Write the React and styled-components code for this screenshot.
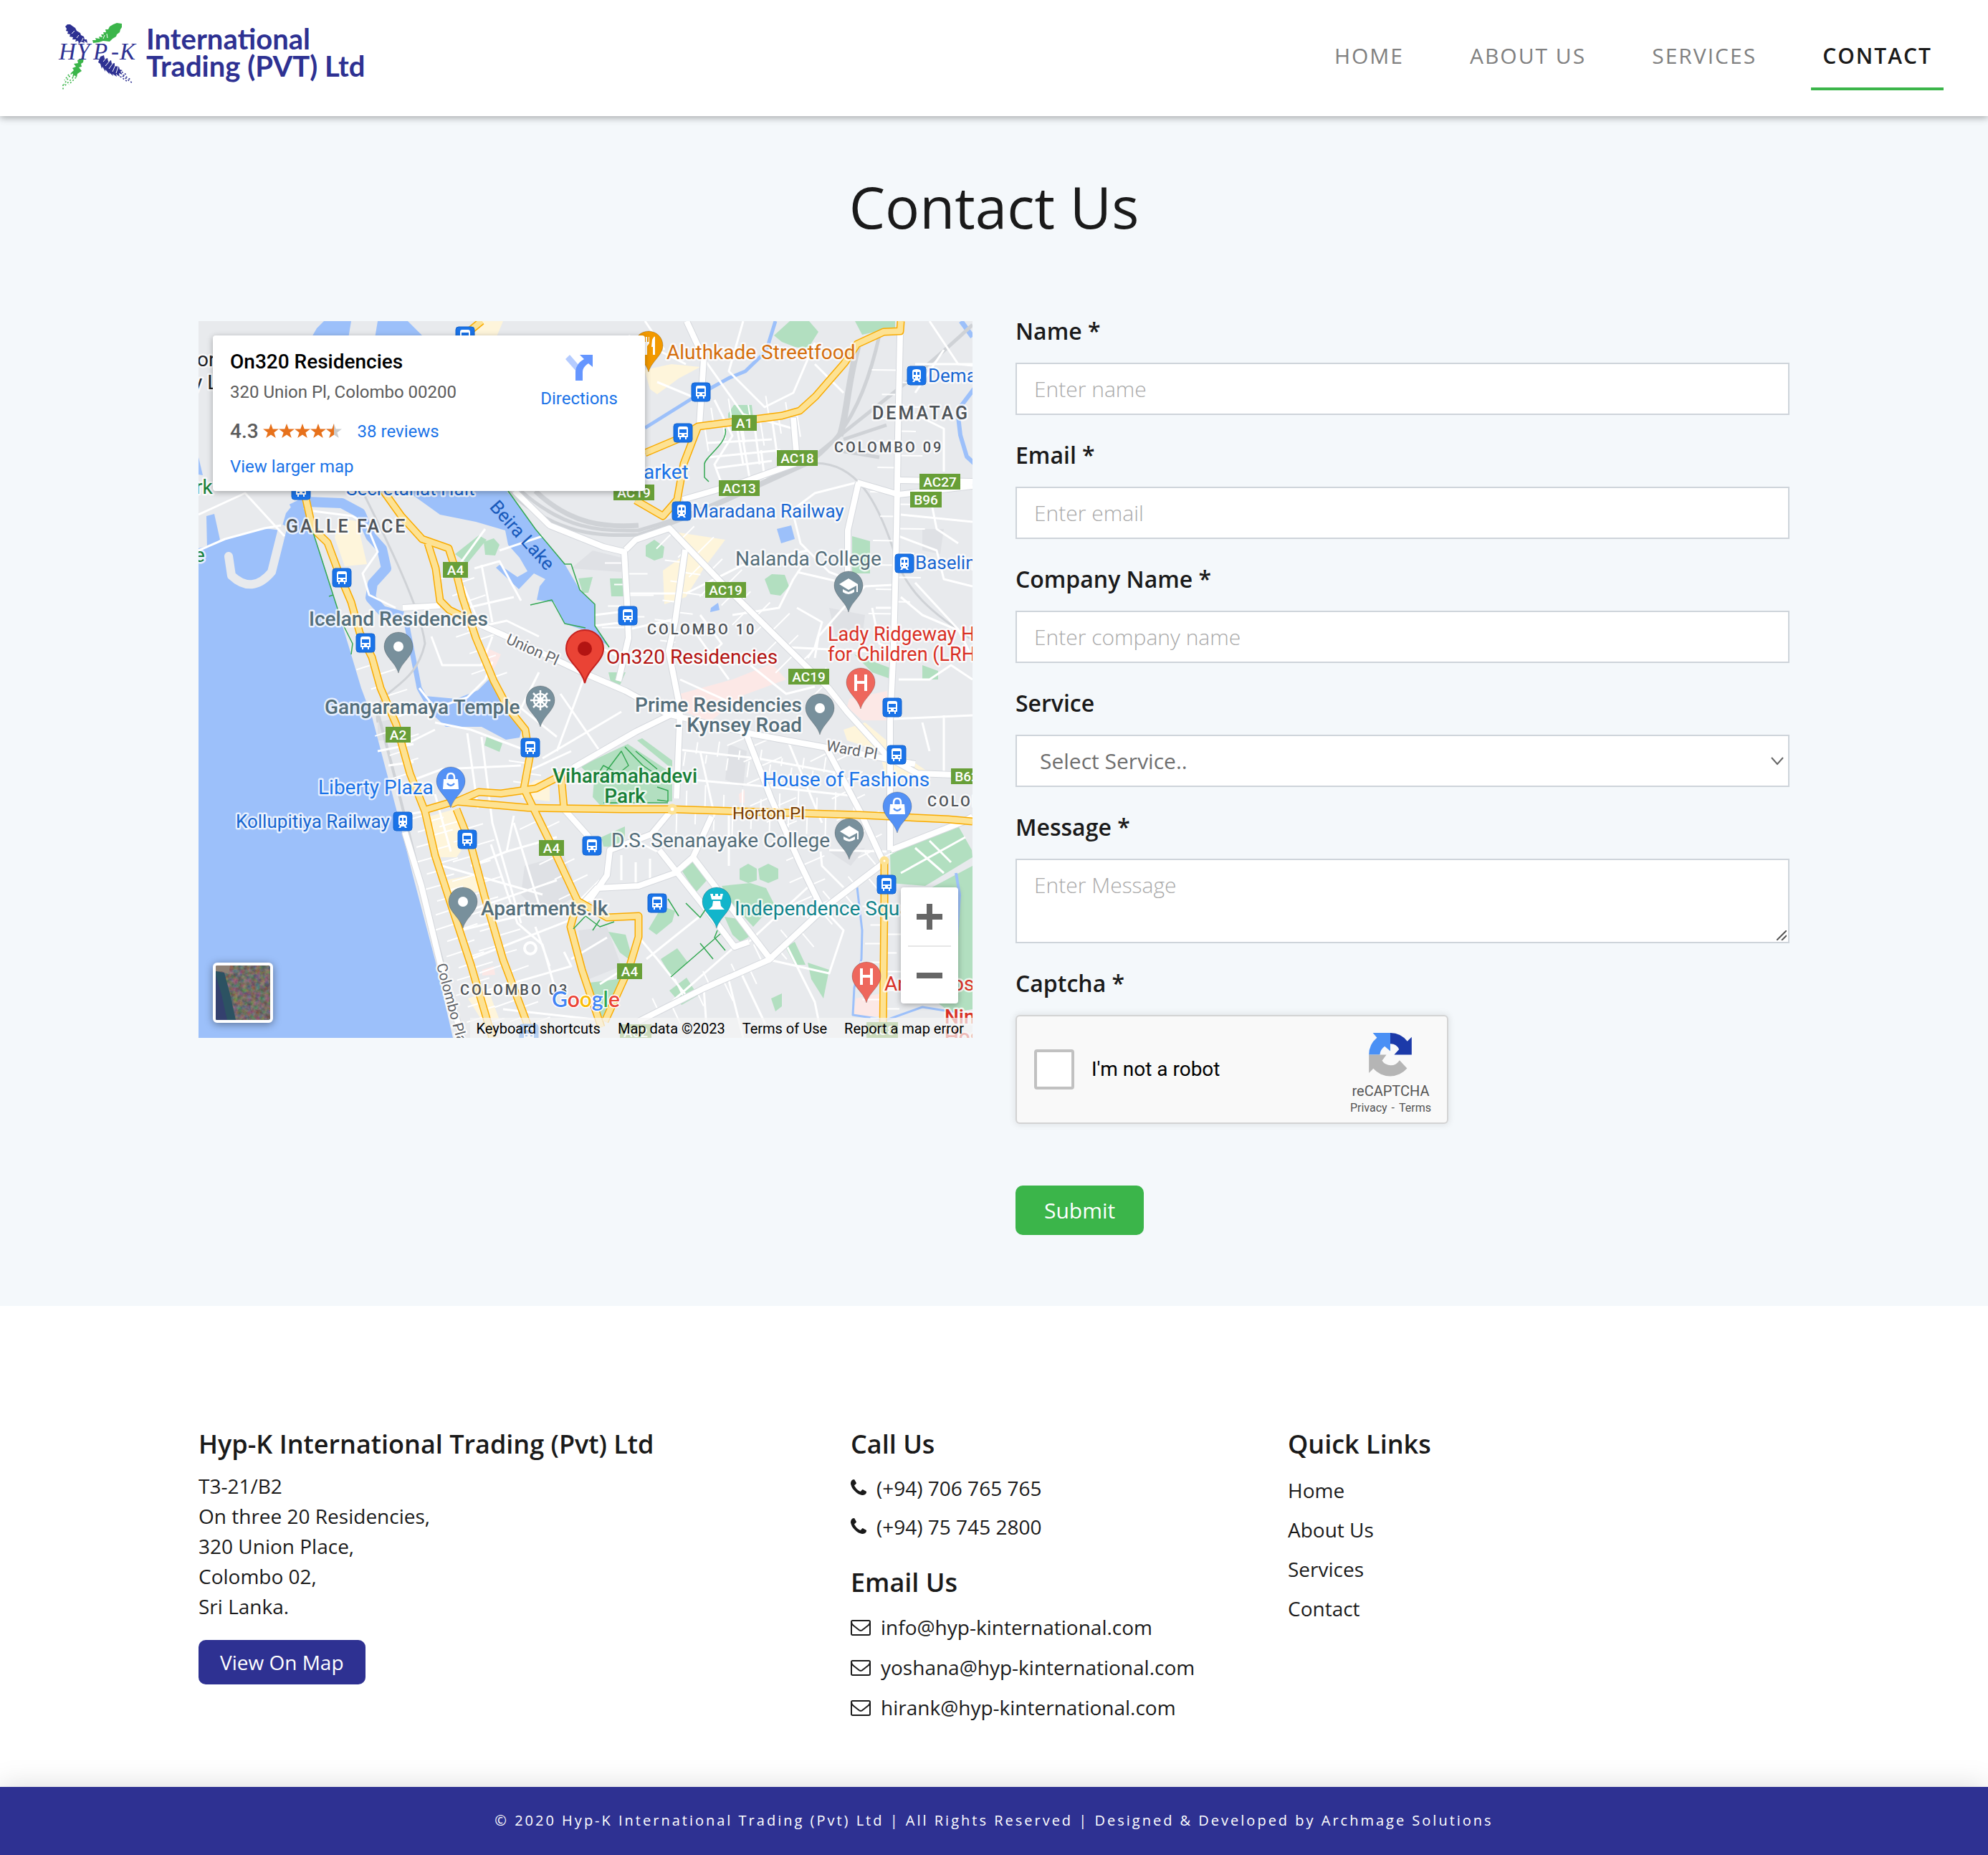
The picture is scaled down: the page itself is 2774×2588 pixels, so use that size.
import React from "react";
import styled, { createGlobalStyle } from "styled-components";

const GREEN = "#3bb54a";
const BLUE = "#2e3192";
const INK = "#1a1a1a";
const LINK = "#1a73e8";

const GlobalStyle = createGlobalStyle`
  *, *::before, *::after { box-sizing: border-box; }
  body {
    margin: 0;
    background: #fff;
    color: ${INK};
    font-family: "Open Sans", "Noto Sans", sans-serif;
    font-size: 28px;
  }
  a { color: inherit; text-decoration: none; }
  h1, h2, p, ul { margin: 0; padding: 0; }
  ul { list-style: none; }
  button, input, select, textarea { font: inherit; }
`;

/* ---------- header ---------- */

const Header = styled.header`
  position: relative;
  z-index: 1;
  display: flex;
  align-items: center;
  justify-content: space-between;
  height: 162px;
  padding: 0 32px 0 80px;
  background: #fff;
  box-shadow: 0 2px 10px rgba(0, 0, 0, 0.35);
`;

const Brand = styled.a`
  display: flex;
  align-items: center;
  gap: 8px;
  margin-bottom: 16px;
  color: ${BLUE};
  font: 700 40px/38px Lato, sans-serif;

  svg { margin-top: 10px; }
`;

const Nav = styled.nav`
  display: flex;
`;

const NavLink = styled.a`
  margin: 0 30px;
  padding: 18px 16px 20px;
  border-bottom: 4px solid ${(p) => (p.$active ? GREEN : "transparent")};
  color: ${(p) => (p.$active ? INK : "#808080")};
  font-weight: ${(p) => (p.$active ? 600 : 400)};
  font-size: 30px;
  line-height: 48px;
  letter-spacing: 2px;
`;

/* ---------- page ---------- */

const Section = styled.main`
  padding: 78px 40px 99px;
  background: #f4f8fb;
`;

const Title = styled.h1`
  margin-bottom: 104px;
  text-align: center;
  font-weight: 400;
  font-size: 80px;
  line-height: 96px;
`;

const Container = styled.div`
  display: grid;
  grid-template-columns: ${(p) => p.$columns};
  column-gap: ${(p) => p.$gap || "0"};
  align-items: start;
  max-width: 2220px;
  margin: 0 auto;
`;

/* ---------- map ---------- */

const MapFrame = styled.section`
  position: relative;
  height: 1000px;
  margin-top: 8px;
  overflow: hidden;
  background: #e8eaed;
  color: #000;
  font-family: Roboto, sans-serif;
`;

const MapCanvas = styled.svg`
  display: block;
  width: 100%;
  height: 100%;
  font-family: Roboto, sans-serif;
`;

const PlaceCard = styled.div`
  position: absolute;
  top: 20px;
  left: 20px;
  display: flex;
  justify-content: space-between;
  width: 603px;
  height: 217px;
  padding: 19px 38px 0 24px;
  border-radius: 4px;
  background: #fff;
  box-shadow: 0 2px 8px rgba(0, 0, 0, 0.3);
  font-size: 24px;
  line-height: 32px;

  a { color: ${LINK}; }
`;

const PlaceName = styled.h2`
  font-weight: 500;
  font-size: 28px;
  line-height: 36px;
`;

const PlaceAddress = styled.p`
  margin-top: 8px;
  color: #5b5b5b;
`;

const Rating = styled.div`
  display: flex;
  align-items: center;
  margin: 23px 0 17px;
  color: #5b5b5b;
  font-size: 28px;
  font-weight: 500;

  svg { margin: 0 22px 0 6px; }
  a { font-size: 24px; font-weight: 400; }
`;

const Directions = styled.a`
  display: flex;
  flex-direction: column;
  align-items: center;
  gap: 9px;
  padding-top: 8px;
`;

const ZoomControl = styled.div`
  position: absolute;
  right: 20px;
  bottom: 48px;
  width: 80px;
  border-radius: 4px;
  background: #fff;
  box-shadow: 0 2px 8px rgba(0, 0, 0, 0.3);
`;

const ZoomButton = styled.button`
  display: grid;
  place-items: center;
  width: 60px;
  height: 81px;
  margin: 0 10px;
  padding: 0;
  border: 0;
  background: none;

  & + & { border-top: 2px solid #e6e6e6; }
`;

const SatelliteButton = styled.button`
  position: absolute;
  left: 20px;
  bottom: 21px;
  width: 84px;
  height: 84px;
  padding: 0;
  overflow: hidden;
  border: 4px solid #fff;
  border-radius: 6px;
  box-shadow: 0 2px 12px rgba(0, 0, 0, 0.4);

  svg { display: block; }
`;

const Attribution = styled.div`
  position: absolute;
  right: 0;
  bottom: 0;
  display: flex;
  gap: 24px;
  padding: 2px 12px 0 8px;
  background: rgba(245, 245, 245, 0.7);
  font-size: 20px;
  line-height: 26px;

  button { padding: 0; border: 0; background: none; color: #000; }
`;

/* ---------- form ---------- */

const Form = styled.form`
  display: flex;
  flex-direction: column;
  align-items: flex-start;
`;

const Field = styled.div`
  width: 100%;
  margin-bottom: ${(p) => (p.$last ? "86px" : "34px")};
`;

const Label = styled.label`
  display: block;
  margin-bottom: 22px;
  font-weight: 600;
  font-size: 32px;
  line-height: 44px;
`;

const Input = styled.input`
  display: block;
  width: 100%;
  height: ${(p) => (p.$tall ? "118px" : "73px")};
  padding: ${(p) => (p.$tall ? "12px 24px" : "0 24px")};
  border: 2px solid #ced4da;
  border-radius: 0;
  background: #fff;
  color: #555;
  font-weight: 300;
  font-size: 30px;
  line-height: 45px;

  &::placeholder { color: #a9a9a9; opacity: 1; }
  &::-webkit-resizer { display: none; }
`;

const Select = styled(Input)`
  appearance: none;
  padding-left: 32px;
  color: #6f6f6f;
  font-weight: 400;
`;

const ControlWrap = styled.div`
  position: relative;

  svg { position: absolute; pointer-events: none; }
`;

const Chevron = styled.svg`
  top: 31px;
  right: 8px;
`;

const Grip = styled.svg`
  right: 4px;
  bottom: 4px;
`;

const Captcha = styled.div`
  display: flex;
  align-items: center;
  width: 604px;
  height: 152px;
  padding: 0 22px 0 24px;
  border: 2px solid #d3d3d3;
  border-radius: 6px;
  background: #f9f9f9;
  box-shadow: 0 0 8px 2px rgba(0, 0, 0, 0.08);
  color: #000;
  font: 28px/34px Roboto, sans-serif;

  input {
    appearance: none;
    width: 56px;
    height: 56px;
    margin: 0 24px 0 0;
    border: 4px solid #c1c1c1;
    border-radius: 4px;
    background: #fff;
  }
`;

const CaptchaBrand = styled.div`
  display: flex;
  flex-direction: column;
  align-items: center;
  margin-left: auto;
  padding-top: 14px;
  color: #555;
  font-size: 20px;
  line-height: 24px;

  svg { margin-bottom: 8px; }
  small { display: flex; gap: 6px; font-size: 16px; }
`;

const Button = styled.button`
  display: inline-flex;
  align-items: center;
  height: ${(p) => (p.$small ? "62px" : "69px")};
  padding: ${(p) => (p.$small ? "0 30px" : "0 40px")};
  border: 0;
  border-radius: 10px;
  background: ${(p) => (p.$small ? BLUE : GREEN)};
  color: #fff;
  font-size: ${(p) => (p.$small ? "28px" : "30px")};
`;

/* ---------- footer ---------- */

const Footer = styled.footer`
  padding: 171px 40px 83px;
`;

const FooterTitle = styled.h2`
  font-weight: 600;
  font-size: 36px;
  line-height: 44px;

  ul + & { margin-top: 29px; }
`;

const Address = styled.address`
  margin: 15px 0 26px;
  font-style: normal;
  line-height: 42px;
`;

const LinkList = styled.ul`
  margin-top: ${(p) => (p.$row === 55 ? 15 : 12)}px;

  li { line-height: ${(p) => p.$row}px; }
  a { display: flex; align-items: center; gap: 14px; }
`;

const BottomBar = styled.div`
  padding: 32px 20px 33px;
  background: ${BLUE};
  box-shadow: 0 0 40px rgba(0, 0, 0, 0.15);
  color: #fff;
  text-align: center;
  font-size: 20px;
  line-height: 30px;
  letter-spacing: 3px;
`;

/* ---------- icons ---------- */

const Logo = () => (
  <svg width="116" height="104" viewBox="0 0 116 104" aria-hidden="true">
    <path fill={BLUE} d="M11 11 14 8 18 8 22 11 25 13 27 17 32 20 33 23 37 25 38 29 41 29 42 34 37 31 38 34 33 32 30 35 29 31 25 32 26 29 21 29 22 26 17 25 18 22 14 21 15 18 12 17 13 14Z" />
    <path fill={GREEN} d="M90 7 90 12 88 15 87 19 83 22 82 25 77 28 73 32 64 31 58 33 50 34 49 30 54 30 53 27 59 28 58 25 63 26 61 22 65 22 64 19 68 19 67 15 71 15 73 11 78 8 83 6Z" />
    <path fill={BLUE} d="M60 53 65 51 66 56 70 55 71 60 75 58 76 63 80 62 80 66 86 67 87 71 91 72 88 74 91 78 86 76 87 81 82 77 83 81 77 77 78 80 72 75 73 78 67 71 67 74 63 67 62 70 60 63 57 61Z" />
    <g stroke="#fff" strokeWidth="1">
      <path d="M64 60l5-6M67 66l6-7M72 70l5-7M77 74l4-9M82 76l3-9M24 17l-4 4M30 23l-3 4M36 27l-2 4M64 28l2-5M70 27l-1-6" />
    </g>
    <path fill="none" stroke={BLUE} strokeWidth="1.6" strokeDasharray="2 2.6" d="M84 78l14 10M88 76l14 9M91 80l14 10M86 72l10 6" />
    <path fill={GREEN} d="M37 54 36 61 33 63 34 67 30 68 34 73 28 77 27 82 24 79 21 83 22 77 19 76 23 72 21 69 26 67 23 63 29 62 28 58Z" />
    <path fill="none" stroke={GREEN} strokeWidth="1.6" strokeDasharray="2 2.6" d="M20 76L9 92M22 82L10 94M26 82L16 92M16 78l-6 8M8 92v8" />
    <text y="57" x="2 27 50 75 87" fill={BLUE} fontFamily="Liberation Serif, serif" fontStyle="italic" fontWeight="400" fontSize="33">HYP-K</text>
  </svg>
);

const Phone = () => (
  <svg width="22" height="28" viewBox="192 0 1408 1792" fill="currentColor" aria-hidden="true">
    <path d="M1600 1240q0 27-10 70.500t-21 68.500q-21 50-122 106-94 51-186 51-27 0-53-3.500t-57.500-12.500-47-14.500-55.500-20.500-49-18q-98-35-175-83-127-79-264-216t-216-264q-48-77-83-175-3-9-18-49t-20.500-55.500-14.500-47-12.500-57.500-3.500-53q0-92 51-186 56-101 106-122 25-11 68.500-21t70.500-10q14 0 21 3 18 6 53 76 11 19 30 54t35 63.500 31 53.500q3 4 17.500 25t21.500 35.500 7 28.500q0 20-28.500 50t-62 55-62 53-28.500 46q0 9 5 22.500t8.500 20.500 14 24 11.500 19q76 137 174 235t235 174q2 1 19 11.500t24 14 20.500 8.500 22.500 5q18 0 46-28.500t53-62 55-62 50-28.500q14 0 28.500 7t35.500 21.500 25 17.500q25 15 53.500 31t63.500 35 54 30q70 35 76 53 3 7 3 21z" />
  </svg>
);

const Envelope = () => (
  <svg width="28" height="28" viewBox="0 0 1792 1792" fill="currentColor" aria-hidden="true">
    <path d="M1664 1504v-768q-32 36-69 66-268 206-426 338-51 43-83 67t-86.500 48.500-102.500 24.500h-2q-48 0-102.500-24.500t-86.500-48.500-83-67q-158-132-426-338-37-30-69-66v768q0 13 9.500 22.500t22.500 9.500h1472q13 0 22.500-9.500t9.500-22.500zm0-1051v-24.500l-.5-13-3-12.500-5.500-9-9-7.500-14-2.500h-1472q-13 0-22.500 9.500t-9.500 22.500q0 168 147 284 193 152 401 317 6 5 35 29.500t46 37.500 44.500 31.500 50.500 27.500 43 9h2q20 0 43-9t50.500-27.500 44.500-31.500 46-37.500 35-29.500q208-165 401-317 54-43 100.500-115.500t46.500-131.500zm128-37v1088q0 66-47 113t-113 47h-1472q-66 0-113-47t-47-113v-1088q0-66 47-113t113-47h1472q66 0 113 47t47 113z" />
  </svg>
);

const RecaptchaLogo = () => (
  <svg width="60" height="61" viewBox="0 0 176 180" aria-hidden="true">
    <path fill="#1c3aa9" d="M88 0A88 88 0 0 1 158 35L176 17V90H104L124 68A38 38 0 0 0 88 45Z" />
    <path fill="#4a90f5" d="M88 0H16L33 20A90 90 0 0 0 0 90H45A46 46 0 0 1 65 55L88 75Z" />
    <path fill="#b5b5b5" d="M0 90H72L54 114A42 42 0 0 0 126 113L157 146A92 92 0 0 1 18 147L0 165Z" />
  </svg>
);

const STAR = "M11 0 13.700 7.600H22L15.400 12.400 17.800 20 11 15.400 4.200 20 6.600 12.400 0 7.600H8.300Z";

const Stars = () => (
  <svg width="110" height="22" viewBox="0 0 110 22" aria-hidden="true">
    {[0, 22, 44, 66].map((x) => (
      <path key={x} transform={`translate(${x} 0)`} d={STAR} fill="#e7711b" />
    ))}
    <g transform="translate(88 0)">
      <path d={STAR} fill="#ccc" />
      <path d="M11 0V15.400L4.200 20 6.600 12.400 0 7.600H8.300Z" fill="#e7711b" />
    </g>
  </svg>
);

/* ---------- map drawing ---------- */

const WATER = [
  "M0 317 8 315 37 304 92 289 115 292 122 268 135 252 150 265 159 292 172 330 188 382 213 465 227 512 242 552 276 681 299 773 330 891 355 1000H0Z",
  "M291 237H432L470 290 511 339 532 375 553 395V425L573 454 540 432 511 422 496 392 472 389 476 370 484 360 468 352 447 374 415 344 420 340 445 357 459 349 448 330 432 312 428 292 387 280 337 270Z",
  "M316 523 360 527 390 515 410 495 414 516 433 548 452 566 448 581 429 584 395 566 345 566 330 552 322 541Z",
  "M175 0H213L209 24H157L165 10Z",
  "M250 0H292L300 8 316 24H246Z",
  "M807 290 827 285 832 304 813 310Z",
  "M715 400 725 393 727 403 714 406Z",
  "M11 272 22 269 30 305 12 318Z",
  "M0 190 6 215 0 214Z",
];

const CANALS = [
  ["M130 262 150 252 200 254 226 268 240 300 256 318 262 345 243 366 240 386 256 404 285 412", 14],
  ["M289 415 308 512 318 530", 7],
  ["M805 0 792 42 763 70 741 79 687 109 623 149", 5],
  ["M1064 0 1080 22", 7],
  ["M1084 92 1059 125 1063 159 1072 189 1084 200", 6],
  ["M919 790 926 850 925 890 915 930 913 968 960 975 1010 957 1080 968", 3],
  ["M1057 770 1062 800 1058 860", 4],
];

const PARKS = [
  "M825 0H852L865 15 850 39 832 36 814 29 803 20Z",
  "M916 0H972V9L926 19Z",
  "M747 117H772L774 135H739V129Z",
  "M624 313 636 305 650 315 648 330 636 334 624 328Z",
  "M912 300 937 307V352H912Z",
  "M790 360 800 353 818 354 824 370 812 383 798 381Z",
  "M574 359H594V384H576Z",
  "M530 359 550 357 544 379H536Z",
  "M358 325 391 299 402 305 375 338Z",
  "M398 308 412 303 420 312 414 327 400 326Z",
  "M533 621 599 590 661 631V670L560 675 550 664 552 640Z",
  "M619 582 661 613V625L612 585Z",
  "M674 766 690 750 712 777 694 797Z",
  "M755 764 767 757 779 764V780L767 784 755 779Z",
  "M781 764 795 757 809 764V778L795 784 783 779Z",
  "M730 788 770 784 792 791 803 813 774 845 741 809Z",
  "M734 831 752 834 768 859 756 866 745 856Z",
  "M628 848 647 816 665 823 661 838 639 856Z",
  "M645 890 668 875 683 895 659 913Z",
  "M657 934 681 916 697 941 674 954Z",
  "M572 852 596 856 607 895 588 881Z",
  "M545 923 570 920 599 916 567 973 556 965Z",
  "M799 945 814 938V956L805 963Z",
  "M819 873 832 866 847 898 832 898Z",
  "M850 895 880 905 872 945 855 918Z",
  "M965 741 1061 706 1079 738 1080 748 1014 788 966 784Z",
  "M1080 760 1014 795 1030 950 1050 965 1080 960Z",
  "M915 465 968 485V500L940 490Z",
  "M1010 480 1032 488V500H1010Z",
  "M402 580 424 589 420 601 399 592Z",
  "M572 490 596 490 588 508 575 503Z",
  "M562 720 595 705 595 735 565 733Z",
];

const PINK = [
  "M672 520 745 500 800 478 820 500 760 522 712 560 679 545Z",
  "M908 527 961 516V557H926L905 538Z",
  "M917 945 952 938V970H914Z",
  "M400 455 422 465 415 480 405 495Z",
  "M396 905 412 900 414 912 396 913Z",
  "M754 660 762 654V672H755Z",
];

const SHOPS = [
  "M196 275 221 279 235 339 204 342 190 302Z",
  "M322 691 357 681 372 731 360 748 334 748Z",
  "M622 68 660 60 700 64 670 80 640 102 630 95Z",
  "M648 348 680 325 735 305 705 345 680 385 650 395Z",
  "M670 295 735 305 690 335Z",
  "M392 0H425L415 24H380Z",
  "M900 570 930 560 990 610 1020 630 960 640 950 600 905 585Z",
  "M345 780 395 770 400 795 350 800Z",
  "M470 640 490 640 490 670 450 665 450 655Z",
  "M376 945 405 935 420 975 395 975Z",
];

const BLOCKS = [
  "M455 760 510 745 530 800 480 830 450 800Z",
  "M530 850 570 845 590 900 540 920Z",
  "M550 320 590 330 590 350 520 345Z",
  "M880 740 930 735 910 760Z",
  "M880 400 930 410 925 450 890 445Z",
  "M250 560 270 555 265 585 250 585Z",
  "M1010 290 1040 290 1035 325 1010 320Z",
  "M740 590 765 600 760 650 735 640Z",
];

const RAILS = [
  ["M432 237C500 300 560 300 614 298 680 278 760 240 850 199 900 165 930 110 950 20", 5],
  ["M450 237C510 290 560 294 614 292 700 268 780 230 860 188 930 130 1000 80 1080 5", 5],
  ["M470 237C520 285 570 288 614 285", 7],
  ["M895 160C905 130 905 90 920 35", 9],
  ["M900 165 960 145M890 180 950 190", 5],
  ["M850 199C920 190 950 260 970 320 985 380 1030 410 1080 445", 3],
  ["M230 240C260 300 310 400 316 450 300 520 240 510 250 560", 3],
  ["M250 545 275 640 300 740 350 930", 4],
];

const MAJOR = [
  "M148 240 159 289 180 309 196 352 213 392 225 435 242 469 254 512 276 563 295 631 316 684 330 745 353 816 380 898 410 1000",
  "M258 237 283 272 312 304 349 317 358 345 368 385 387 442 412 502 432 540 456 570 462 609 454 652 468 681 494 734 529 809 570 832 614 830 614 859 601 902 567 977",
  "M529 809 519 845 535 905 562 985",
  "M320 310 331 345 337 390 350 403 385 420",
  "M316 682 357 670 460 679 593 681 661 681 923 689 1046 695 1080 698",
  "M352 674 391 657 422 659 471 652 506 634 510 680",
  "M360 681 380 731 399 802 425 891 466 1000",
  "M980 0 979 14 956 15 919 32 901 59 861 105 839 125 814 132 697 147 668 165 623 184",
  "M697 147 677 199 668 249 648 272 610 250",
  "M395 0 378 14",
  "M957 752V809L955 1000",
];

const STREETS = [
  "M979 19 976 159 974 292 970 452 965 559V738",
  "M681 0 705 52 699 145",
  "M441 237 490 285 565 315 594 322 598 392 600 442 586 502",
  "M596 319 610 305 657 289 727 362 821 455 879 512 905 545 963 609 1003 631 1080 634",
  "M679 319 672 369 665 419 656 460 672 541 667 666",
  "M676 249 759 225 832 199 834 182 830 135",
  "M919 225 977 242 1080 230M921 225 906 292V352M977 222 1080 224",
  "M385 420 441 445 540 492 596 516 654 548 777 577 876 595 1000 618",
  "M523 623 610 573 661 548",
  "M763 573 799 666 839 756 868 816",
  "M876 595 923 684 956 756",
  "M956 756 872 820 796 891 705 931 614 977",
  "M643 738 705 816 748 873 768 866M690 748 800 893",
  "M716 691 690 748 665 770 614 788 556 791 523 827",
  "M661 681 632 716 574 738 570 773 545 809",
  "M285 400 337 397",
  "M288 713 311 788 337 895 368 1000",
  "M966 738 1068 698 1080 691",
  "M510 681 545 720",
];

const LANES = [
  "M160 265 215 272 235 285 250 322 229 352 238 382 275 400",
  "M0 320 37 304 92 289 115 285M0 270 65 240 120 300",
  "M600 20 680 60M623 0 650 40M705 52 760 130 830 150M760 0 740 70 790 120 830 100 860 30",
  "M860 60 900 100M640 85 700 110M720 110 745 160 720 200 735 240M757 150 770 225M785 180 790 220",
  "M710 170 800 165M712 190 812 180M722 205 800 195M750 140 760 200M775 140 783 200M800 135 808 190",
  "M594 380 668 380M600 430 668 415M680 380 760 340 850 320M830 270 840 310 880 350 906 360",
  "M820 270 860 240 919 225M745 410 810 400 830 360 850 330M835 400 870 420 860 455 850 470",
  "M821 455 880 458 960 462M860 470 865 440 900 400 930 370 970 368M835 350 900 365",
  "M700 480 730 450 700 410M672 500 760 540M770 480 820 520 860 510M690 430 740 500",
  "M672 598 780 610 890 630M690 640 800 650 910 662M820 580 870 700M700 600 720 690",
  "M977 300 1030 320 1040 360 1080 370M1020 240 1030 290 1060 310M1000 365 1060 430 1080 470",
  "M945 400 970 400M940 400 950 450 1000 470M980 385 1010 410 1080 440M1000 60 1080 60M1000 130 1040 150V210",
  "M977 500 1020 500 1050 480 1080 500M970 555 1080 550M1010 560 1020 600M1040 550 1040 630M980 270 1080 280",
  "M308 512 330 540 375 525 400 500 410 475M330 560 380 570 460 600M375 575 390 680M395 580 410 700 450 840",
  "M300 640 340 625 450 620M290 590 330 570M410 440 395 480 340 480 325 440M375 430 430 418 475 440",
  "M475 490 450 540 500 580M540 492 500 600M505 520 560 600M480 610 590 545M455 630 520 600",
  "M430 740 500 720M340 760 480 800M355 830 500 780M365 850 510 815M380 890 520 835M398 935 520 900 510 880",
  "M408 730 445 840 480 870 500 940M440 700 480 830M330 660 352 740M470 845 490 900M425 960 560 975",
  "M614 859 640 890 680 940M625 890 700 830M748 873 660 950M705 931 710 1000M740 920 760 1000M755 905 800 1000",
  "M796 891 880 910 900 850 872 820M820 870 860 950 870 1000M768 866 850 790M740 690 740 760",
  "M868 740 870 760 900 790M880 738 960 740M1000 735 1040 770M1020 725 1050 755M980 770 1070 720",
  "M570 860 520 890M600 900 560 925M640 740 600 720M590 780V745M610 785V755M630 780V750",
  "M440 690 430 740 380 760M520 820 560 780M250 600 300 590M265 620 300 615M280 690 316 684",
  "M420 320 480 300M400 290 360 345M385 345 420 335 450 390M370 370 395 430M395 340 410 420M375 400 440 385",
  "M594 420 553 425M594 405 553 410M540 480 560 455 590 470M1020 0 1060 60 1080 62M1000 100 1040 40",
];

/* Draws short dead-end lanes to both sides of a road given as points. */
const sideLanes = (points, step, length) => {
  const out = [];
  let n = 0;
  for (let i = 1; i < points.length; i += 1) {
    const [ax, ay] = points[i - 1];
    const [bx, by] = points[i];
    const dist = Math.hypot(bx - ax, by - ay);
    const ux = (bx - ax) / dist;
    const uy = (by - ay) / dist;
    for (let d = step / 2; d < dist; d += step) {
      n += 1;
      const side = n % 2 ? 1 : -1;
      const len = length * (0.6 + ((n * 37) % 10) / 14);
      const x = ax + ux * d;
      const y = ay + uy * d;
      out.push(`M${x.toFixed(1)} ${y.toFixed(1)}l${(-uy * len * side).toFixed(1)} ${(ux * len * side).toFixed(1)}`);
    }
  }
  return out.join("");
};

const TWIGS = [
  sideLanes([[316, 684], [353, 816], [380, 898], [408, 990]], 10, 26),
  sideLanes([[366, 690], [399, 802], [425, 891], [460, 990]], 13, 30),
  sideLanes([[661, 681], [923, 689]], 13, 30),
  sideLanes([[672, 600], [890, 632]], 15, 18),
  sideLanes([[977, 60], [972, 420]], 17, 34),
  sideLanes([[763, 573], [868, 816]], 15, 28),
  sideLanes([[600, 330], [600, 440]], 15, 30),
  sideLanes([[657, 289], [879, 512]], 15, 30),
  sideLanes([[460, 610], [454, 652], [529, 809]], 14, 24),
  sideLanes([[956, 756], [796, 891], [640, 965]], 20, 26),
  sideLanes([[955, 810], [955, 990]], 13, 26),
  sideLanes([[876, 595], [956, 756]], 15, 26),
  sideLanes([[358, 345], [412, 502]], 14, 24),
  sideLanes([[700, 150], [840, 128]], 13, 30),
  sideLanes([[680, 330], [665, 450]], 14, 26),
  sideLanes([[245, 470], [300, 640]], 16, 26),
];

const TRAILS = [
  "M432 237 470 290 511 339 520 339 532 375 553 395V425L573 455",
  "M463 396 493 389 511 422 540 428",
  "M159 292 200 420 215 450 213 465M182 384 188 382",
  "M735 150C740 170 705 190 706 200V218L712 224",
  "M655 806 670 830M680 812 700 832 708 820M659 915 728 855M700 868 718 890M724 850 720 860 735 878",
  "M595 594 620 620 650 640M560 640 590 600 600 620 575 640M640 650 655 655 655 670 640 668M552 640 565 620 580 628M610 600 640 625",
  "M565 672H655M523 848 540 830 560 845 580 838M560 835 550 850",
];

const AREA = "#4e5358";
const GREY = "#546e7a";
const TRANSIT = "#1967d2";

const LABELS = [
  { t: "or", x: -2, y: 63, c: "#202124", s: 28 },
  { t: "y L", x: -8, y: 95, c: "#202124", s: 28 },
  { t: "Aluthkade Streetfood", x: 653, y: 53, c: "#d56e0c" },
  { t: "Dema", x: 1018, y: 85, c: TRANSIT, s: 26 },
  { t: "DEMATAG", x: 940, y: 137, c: AREA, s: 25, ls: 3, w: 500 },
  { t: "COLOMBO 09", x: 887, y: 183, c: AREA, s: 20, ls: 3, w: 500 },
  { t: "arket", x: 621, y: 220, c: LINK },
  { t: "Secretariat Halt", x: 206, y: 243, c: TRANSIT, s: 26 },
  { t: "rk", x: -4, y: 241, c: "#188038" },
  { t: "e", x: -6, y: 336, c: "#188038" },
  { t: "Maradana Railway", x: 689, y: 274, c: TRANSIT, s: 26 },
  { t: "Nalanda College", x: 749, y: 341, c: GREY },
  { t: "Baselin", x: 1000, y: 346, c: TRANSIT, s: 26 },
  { t: "COLOMBO 10", x: 626, y: 437, c: AREA, s: 20, ls: 3, w: 500 },
  { t: "On320 Residencies", x: 569, y: 478, c: "#b31412" },
  { t: "Lady Ridgeway H", x: 878, y: 446, c: "#d93025", s: 27 },
  { t: "for Children (LRH", x: 878, y: 474, c: "#d93025", s: 27 },
  { t: "GALLE FACE", x: 122, y: 295, c: AREA, s: 25, ls: 3, w: 500 },
  { t: "Beira Lake", x: 405, y: 260, c: "#185abc", s: 26, r: 48, plain: true },
  { t: "Iceland Residencies", x: 154, y: 425, c: GREY, w: 500 },
  { t: "Union Pl", x: 428, y: 449, c: "#5f6368", s: 21, r: 24 },
  { t: "Gangaramaya Temple", x: 176, y: 548, c: GREY, w: 500 },
  { t: "Liberty Plaza", x: 167, y: 660, c: LINK },
  { t: "Kollupitiya Railway", x: 52, y: 707, c: TRANSIT, s: 26 },
  { t: "Apartments.lk", x: 394, y: 829, c: GREY, w: 500 },
  { t: "COLOMBO 03", x: 365, y: 940, c: AREA, s: 20, ls: 3, w: 500 },
  { t: "Colombo Plan Rd", x: 332, y: 898, c: "#5f6368", s: 20, r: 75 },
  { t: "Prime Residencies", x: 842, y: 545, c: GREY, w: 500, a: "end" },
  { t: "- Kynsey Road", x: 842, y: 573, c: GREY, w: 500, a: "end" },
  { t: "Ward Pl", x: 875, y: 599, c: "#5f6368", s: 21, r: 10 },
  { t: "Viharamahadevi", x: 494, y: 644, c: "#188038", w: 500 },
  { t: "Park", x: 595, y: 672, c: "#188038", w: 500, a: "middle" },
  { t: "House of Fashions", x: 787, y: 649, c: LINK },
  { t: "COLOI", x: 1017, y: 677, c: AREA, s: 20, ls: 3, w: 500 },
  { t: "Horton Pl", x: 745, y: 695, c: "#7a3e00", s: 24 },
  { t: "D.S. Senanayake College", x: 576, y: 734, c: GREY },
  { t: "Independence Square", x: 748, y: 829, c: "#12858d" },
  { t: "An", x: 957, y: 934, c: "#d93025" },
  { t: "os", x: 1052, y: 934, c: "#d93025" },
  { t: "Nin", x: 1041, y: 980, c: "#d93025", w: 500 },
  { t: "Hos", x: 1041, y: 1008, c: "#d93025", w: 500 },
];

const SHIELDS = [
  ["A1", 744, 131], ["AC18", 807, 180], ["AC13", 726, 222], ["AC19", 579, 228],
  ["AC27", 1006, 213], ["B96", 993, 238], ["AC19", 707, 364], ["AC19", 823, 485],
  ["A4", 341, 336], ["A2", 261, 566], ["A4", 475, 724], ["A4", 584, 896],
  ["B62", 1050, 624], ["A02", 588, 981], ["AC8", 932, 978],
];
const SHIELD_WIDTH = { 2: 35, 3: 44, 4: 57 };

const STOPS = [
  [688, 86], [663, 143], [989, 63, 1], [661, 252, 1], [972, 325, 1], [586, 398],
  [359, 8], [130, 223], [187, 345], [220, 436], [450, 582], [272, 685, 1],
  [362, 710], [536, 719], [627, 799], [955, 526], [961, 592], [947, 773], [448, 981],
];

const PINS = [
  ["cap", 907, 406, "#78909c"], ["H", 924, 541, "#ee675c"], ["H", 932, 951, "#ee675c"],
  ["dot", 279, 491, "#78909c"], ["wheel", 477, 566, "#78909c"], ["bag", 352, 679, "#5491f5"],
  ["dot", 369, 847, "#78909c"], ["dot", 867, 577, "#78909c"], ["cap", 908, 751, "#78909c"],
  ["bag", 975, 714, "#5491f5"], ["rook", 723, 847, "#12b5cb"], ["fork", 628, 71, "#f29900"],
];

const GLYPHS = {
  dot: <circle r="7" fill="#fff" />,
  cap: <path fill="#fff" d="M-13-2 0-10 13-2V9H11V0L0 6ZM-8 5V9Q0 15 8 9V5L0 9Z" />,
  H: <path fill="#fff" d="M-9-11H-5V-2H5V-11H9V12H5V2H-5V12H-9Z" />,
  wheel: (
    <g stroke="#fff" strokeWidth="2.5" fill="none">
      <circle r="9" /><circle r="3" />
      <path d="M0-14V14M-14 0H14M-10-10 10 10M-10 10 10-10" />
    </g>
  ),
  bag: (
    <g>
      <path fill="#fff" d="M-10-3H10L11 11H-11Z" />
      <path fill="none" stroke="#fff" strokeWidth="2.5" d="M-5-2V-5Q-5-11 0-11T5-5V-2" />
      <path fill="none" stroke="#5491f5" strokeWidth="2.5" d="M-5 3Q0 9 5 3" />
    </g>
  ),
  rook: <path fill="#fff" d="M-9-11H-5V-8H-2V-11H2V-8H5V-11H9L7-3H-7ZM-5-1H5L6 6 11 11H-11L-6 6Z" />,
  fork: <path fill="#fff" d="M-8-12H-6V-5H-4V-12H-2V-5H0V-12H1V-3L-2 1V13H-5V1L-8-3ZM5-8Q8-14 9-12V13H6V2H4Z" />,
};

const Stop = ({ x, y, rail }) => (
  <g transform={`translate(${x} ${y})`}>
    <rect width="26" height="26" rx="4" fill="#1a73e8" stroke="#1765cc" />
    {rail ? (
      <path fill="#fff" fillRule="evenodd" d="M8 5Q13 3 18 5 19 6 19 8V17L17 19 19 22H16L15 20H11L10 22H7L9 19 7 17V8Q7 6 8 5ZM9 8V12H12V8ZM14 8V12H17V8ZM9 15V17H11V15ZM15 15V17H17V15Z" />
    ) : (
      <path fill="#fff" fillRule="evenodd" d="M6 7Q6 4 9 4H17Q20 4 20 7V19H18V22H16V19H10V22H8V19H6ZM8 8V13H18V8ZM8 15V17H11V15ZM15 15V17H18V15Z" />
    )}
  </g>
);

const CityMap = () => (
  <MapCanvas viewBox="0 0 1080 1000" preserveAspectRatio="xMidYMid slice" role="img" aria-label="Map of Colombo">
    <rect width="1080" height="1000" fill="#e8eaed" />
    {BLOCKS.map((d) => <path key={d} d={d} fill="#dfe1e5" />)}
    {SHOPS.map((d) => <path key={d} d={d} fill="#fef5db" />)}
    {PINK.map((d) => <path key={d} d={d} fill="#fce8e6" />)}
    {PARKS.map((d) => <path key={d} d={d} fill="#b2dfc0" />)}
    {WATER.map((d) => <path key={d} d={d} fill="#9cc0fa" />)}
    <path d="M42 328 46 355Q75 382 102 350L117 290" fill="none" stroke="#e8eaed" strokeWidth="12" strokeLinecap="round" strokeLinejoin="round" />
    <g fill="none" strokeLinejoin="round">
      {CANALS.map(([d, w]) => <path key={d} d={d} stroke="#9cc0fa" strokeWidth={w} />)}
      {RAILS.map(([d, w]) => <path key={d} d={d} stroke="#cfd2d6" strokeWidth={w} />)}
      {TWIGS.map((d) => <path key={d} d={d} stroke="#fff" strokeWidth="2" />)}
      {LANES.map((d) => <path key={d} d={d} stroke="#fff" strokeWidth="3" />)}
      {STREETS.map((d) => <path key={d} d={d} stroke="#d5d8dd" strokeWidth="10" />)}
      {STREETS.map((d) => <path key={d} d={d} stroke="#fff" strokeWidth="8" />)}
      <circle cx="463" cy="875" r="8" stroke="#fff" strokeWidth="4" />
      {MAJOR.map((d) => <path key={d} d={d} stroke="#f9ab00" strokeWidth="11" />)}
      {MAJOR.map((d) => <path key={d} d={d} stroke="#fde293" strokeWidth="8" />)}
      {TRAILS.map((d) => <path key={d} d={d} stroke="#34a853" strokeWidth="1.5" />)}
    </g>
    <circle cx="661" cy="681" r="5" fill="#fff" stroke="#fde293" strokeWidth="5" />
    <circle cx="957" cy="753" r="4" fill="#fff" stroke="#fde293" strokeWidth="5" />
    {SHIELDS.map(([t, x, y]) => (
      <g key={`${x}-${y}`}>
        <rect x={x} y={y} width={SHIELD_WIDTH[t.length]} height="22" fill="#689f38" />
        <text x={x + SHIELD_WIDTH[t.length] / 2} y={y + 18} textAnchor="middle" fontSize="19" fontWeight="500" fill="#fff">{t}</text>
      </g>
    ))}
    {STOPS.map(([x, y, rail]) => <Stop key={`${x}-${y}`} x={x} y={y} rail={rail} />)}
    {PINS.map(([kind, x, y, color]) => (
      <g key={`${x}-${y}`} transform={`translate(${x} ${y - 37})`}>
        <path d="M0 37C-4 22-20 14-20 0A20 20 0 0 1 20 0C20 14 4 22 0 37Z" fill={color} stroke="#000" strokeOpacity="0.2" />
        {GLYPHS[kind]}
      </g>
    ))}
    {LABELS.map(({ t, x, y, c, s = 28, w = 400, ls, r, a, plain }) => (
      <text
        key={`${x}-${y}`}
        x={x}
        y={y}
        fill={c}
        fontSize={s}
        fontWeight={w}
        letterSpacing={ls}
        textAnchor={a}
        transform={r ? `rotate(${r} ${x} ${y})` : undefined}
        stroke={plain ? "none" : "#fff"}
        strokeOpacity="0.75"
        strokeWidth="5"
        strokeLinejoin="round"
        paintOrder="stroke"
      >
        {t}
      </text>
    ))}
    <g transform="translate(539 457)">
      <path d="M0 48C-4 28-26 18-26 0A26 26 0 0 1 26 0C26 18 4 28 0 48Z" fill="#ea4335" stroke="#c5221f" strokeWidth="2" />
      <circle r="10" fill="#b31412" />
    </g>
    <text x="493" y="957" fontFamily="Lato, sans-serif" fontSize="30" fontWeight="600" stroke="#fff" strokeWidth="3" paintOrder="stroke">
      <tspan fill="#4285f4">G</tspan>
      <tspan fill="#ea4335">o</tspan>
      <tspan fill="#fbbc04">o</tspan>
      <tspan fill="#4285f4">g</tspan>
      <tspan fill="#34a853">l</tspan>
      <tspan fill="#ea4335">e</tspan>
    </text>
  </MapCanvas>
);

const SatelliteTile = () => (
  <svg width="76" height="76" viewBox="0 0 76 76" aria-hidden="true">
    <filter id="terrain" x="0" y="0" width="100%" height="100%" colorInterpolationFilters="sRGB">
      <feTurbulence type="fractalNoise" baseFrequency="0.16" numOctaves="4" seed="4" />
      <feColorMatrix values="0.5 0 0 0 0.2  0 0.4 0 0 0.22  0 0 0.4 0 0.2  0 0 0 0 1" />
    </filter>
    <rect width="76" height="76" fill="#736f68" filter="url(#terrain)" />
    <path d="M0 8 12 10 20 40 28 76H0Z" fill="#2c5262" />
    <path d="M0 14 8 40 16 76H0Z" fill="#34406e" />
    <path d="M0 0H20L18 12 8 8 0 8Z" fill="#8e8073" />
  </svg>
);

/* ---------- content ---------- */

const NAV = ["HOME", "ABOUT US", "SERVICES", "CONTACT"];
const TEXT_FIELDS = [
  ["name", "Name *", "Enter name", "text"],
  ["email", "Email *", "Enter email", "email"],
  ["company", "Company Name *", "Enter company name", "text"],
];
const ADDRESS = ["T3-21/B2", "On three 20 Residencies,", "320 Union Place,", "Colombo 02,", "Sri Lanka."];
const PHONES = ["(+94) 706 765 765", "(+94) 75 745 2800"];
const EMAILS = ["info@hyp-kinternational.com", "yoshana@hyp-kinternational.com", "hirank@hyp-kinternational.com"];
const QUICK = ["Home", "About Us", "Services", "Contact"];

const LocationMap = () => (
  <MapFrame>
    <CityMap />
    <PlaceCard>
      <div>
        <PlaceName>On320 Residencies</PlaceName>
        <PlaceAddress>320 Union Pl, Colombo 00200</PlaceAddress>
        <Rating>
          4.3
          <Stars />
          <a href="#reviews">38 reviews</a>
        </Rating>
        <a href="#map">View larger map</a>
      </div>
      <Directions href="#directions">
        <svg width="38" height="36" viewBox="0 0 38 36" aria-hidden="true">
          <path fill="#b5ccff" d="M0 6 6 0 20 16 15 23Z" />
          <path fill="#6596ff" d="M20 0H38V17L32 12Q24 17 24 24V36H14V23Q15 12 26 6Z" />
        </svg>
        Directions
      </Directions>
    </PlaceCard>
    <SatelliteButton type="button" aria-label="Show satellite imagery">
      <SatelliteTile />
    </SatelliteButton>
    <ZoomControl>
      <ZoomButton type="button" aria-label="Zoom in">
        <svg width="36" height="36" viewBox="0 0 36 36"><path fill="#666" d="M14 0H22V14H36V22H22V36H14V22H0V14H14Z" /></svg>
      </ZoomButton>
      <ZoomButton type="button" aria-label="Zoom out">
        <svg width="36" height="36" viewBox="0 0 36 36"><path fill="#666" d="M0 14H36V22H0Z" /></svg>
      </ZoomButton>
    </ZoomControl>
    <Attribution>
      <button type="button">Keyboard shortcuts</button>
      <span>Map data ©2023</span>
      <a href="#terms">Terms of Use</a>
      <a href="#report">Report a map error</a>
    </Attribution>
  </MapFrame>
);

const ContactForm = () => (
  <Form>
    {TEXT_FIELDS.map(([id, label, placeholder, type]) => (
      <Field key={id}>
        <Label htmlFor={id}>{label}</Label>
        <Input id={id} type={type} placeholder={placeholder} />
      </Field>
    ))}
    <Field>
      <Label htmlFor="service">Service</Label>
      <ControlWrap>
        <Select as="select" id="service">
          <option>Select Service..</option>
        </Select>
        <Chevron width="18" height="12" viewBox="0 0 18 12" aria-hidden="true">
          <path d="M1 1 9 10 17 1" fill="none" stroke="#666" strokeWidth="2" />
        </Chevron>
      </ControlWrap>
    </Field>
    <Field>
      <Label htmlFor="message">Message *</Label>
      <ControlWrap>
        <Input as="textarea" id="message" $tall placeholder="Enter Message" />
        <Grip width="14" height="14" viewBox="0 0 14 14" aria-hidden="true">
          <path d="M0 14 14 0M7 14 14 7" fill="none" stroke="#555" strokeWidth="2" />
        </Grip>
      </ControlWrap>
    </Field>
    <Field $last>
      <Label htmlFor="robot">Captcha *</Label>
      <Captcha>
        <input type="checkbox" id="robot" />
        <label htmlFor="robot">I'm not a robot</label>
        <CaptchaBrand>
          <RecaptchaLogo />
          <span>reCAPTCHA</span>
          <small><a href="#privacy">Privacy</a><span>-</span><a href="#captcha-terms">Terms</a></small>
        </CaptchaBrand>
      </Captcha>
    </Field>
    <Button type="submit">Submit</Button>
  </Form>
);

export default function App() {
  return (
    <>
      <GlobalStyle />
      <Header>
        <Brand href="#home">
          <Logo />
          <span>International<br />Trading (PVT) Ltd</span>
        </Brand>
        <Nav>
          {NAV.map((item) => (
            <NavLink key={item} href="#nav" $active={item === "CONTACT"}>{item}</NavLink>
          ))}
        </Nav>
      </Header>
      <Section>
        <Title>Contact Us</Title>
        <Container $columns="1fr 1fr" $gap="60px">
          <LocationMap />
          <ContactForm />
        </Container>
      </Section>
      <Footer>
        <Container $columns="910fr 610fr 700fr">
          <section>
            <FooterTitle>Hyp-K International Trading (Pvt) Ltd</FooterTitle>
            <Address>
              {ADDRESS.map((line) => <div key={line}>{line}</div>)}
            </Address>
            <Button as="a" href="#map" $small>View On Map</Button>
          </section>
          <section>
            <FooterTitle>Call Us</FooterTitle>
            <LinkList $row={54}>
              {PHONES.map((n) => <li key={n}><a href="#call"><Phone />{n}</a></li>)}
            </LinkList>
            <FooterTitle>Email Us</FooterTitle>
            <LinkList $row={56}>
              {EMAILS.map((m) => <li key={m}><a href={`mailto:${m}`}><Envelope />{m}</a></li>)}
            </LinkList>
          </section>
          <section>
            <FooterTitle>Quick Links</FooterTitle>
            <LinkList $row={55}>
              {QUICK.map((q) => <li key={q}><a href="#quick">{q}</a></li>)}
            </LinkList>
          </section>
        </Container>
      </Footer>
      <BottomBar>
        © 2020 Hyp-K International Trading (Pvt) Ltd | All Rights Reserved | Designed &amp; Developed by Archmage Solutions
      </BottomBar>
    </>
  );
}
